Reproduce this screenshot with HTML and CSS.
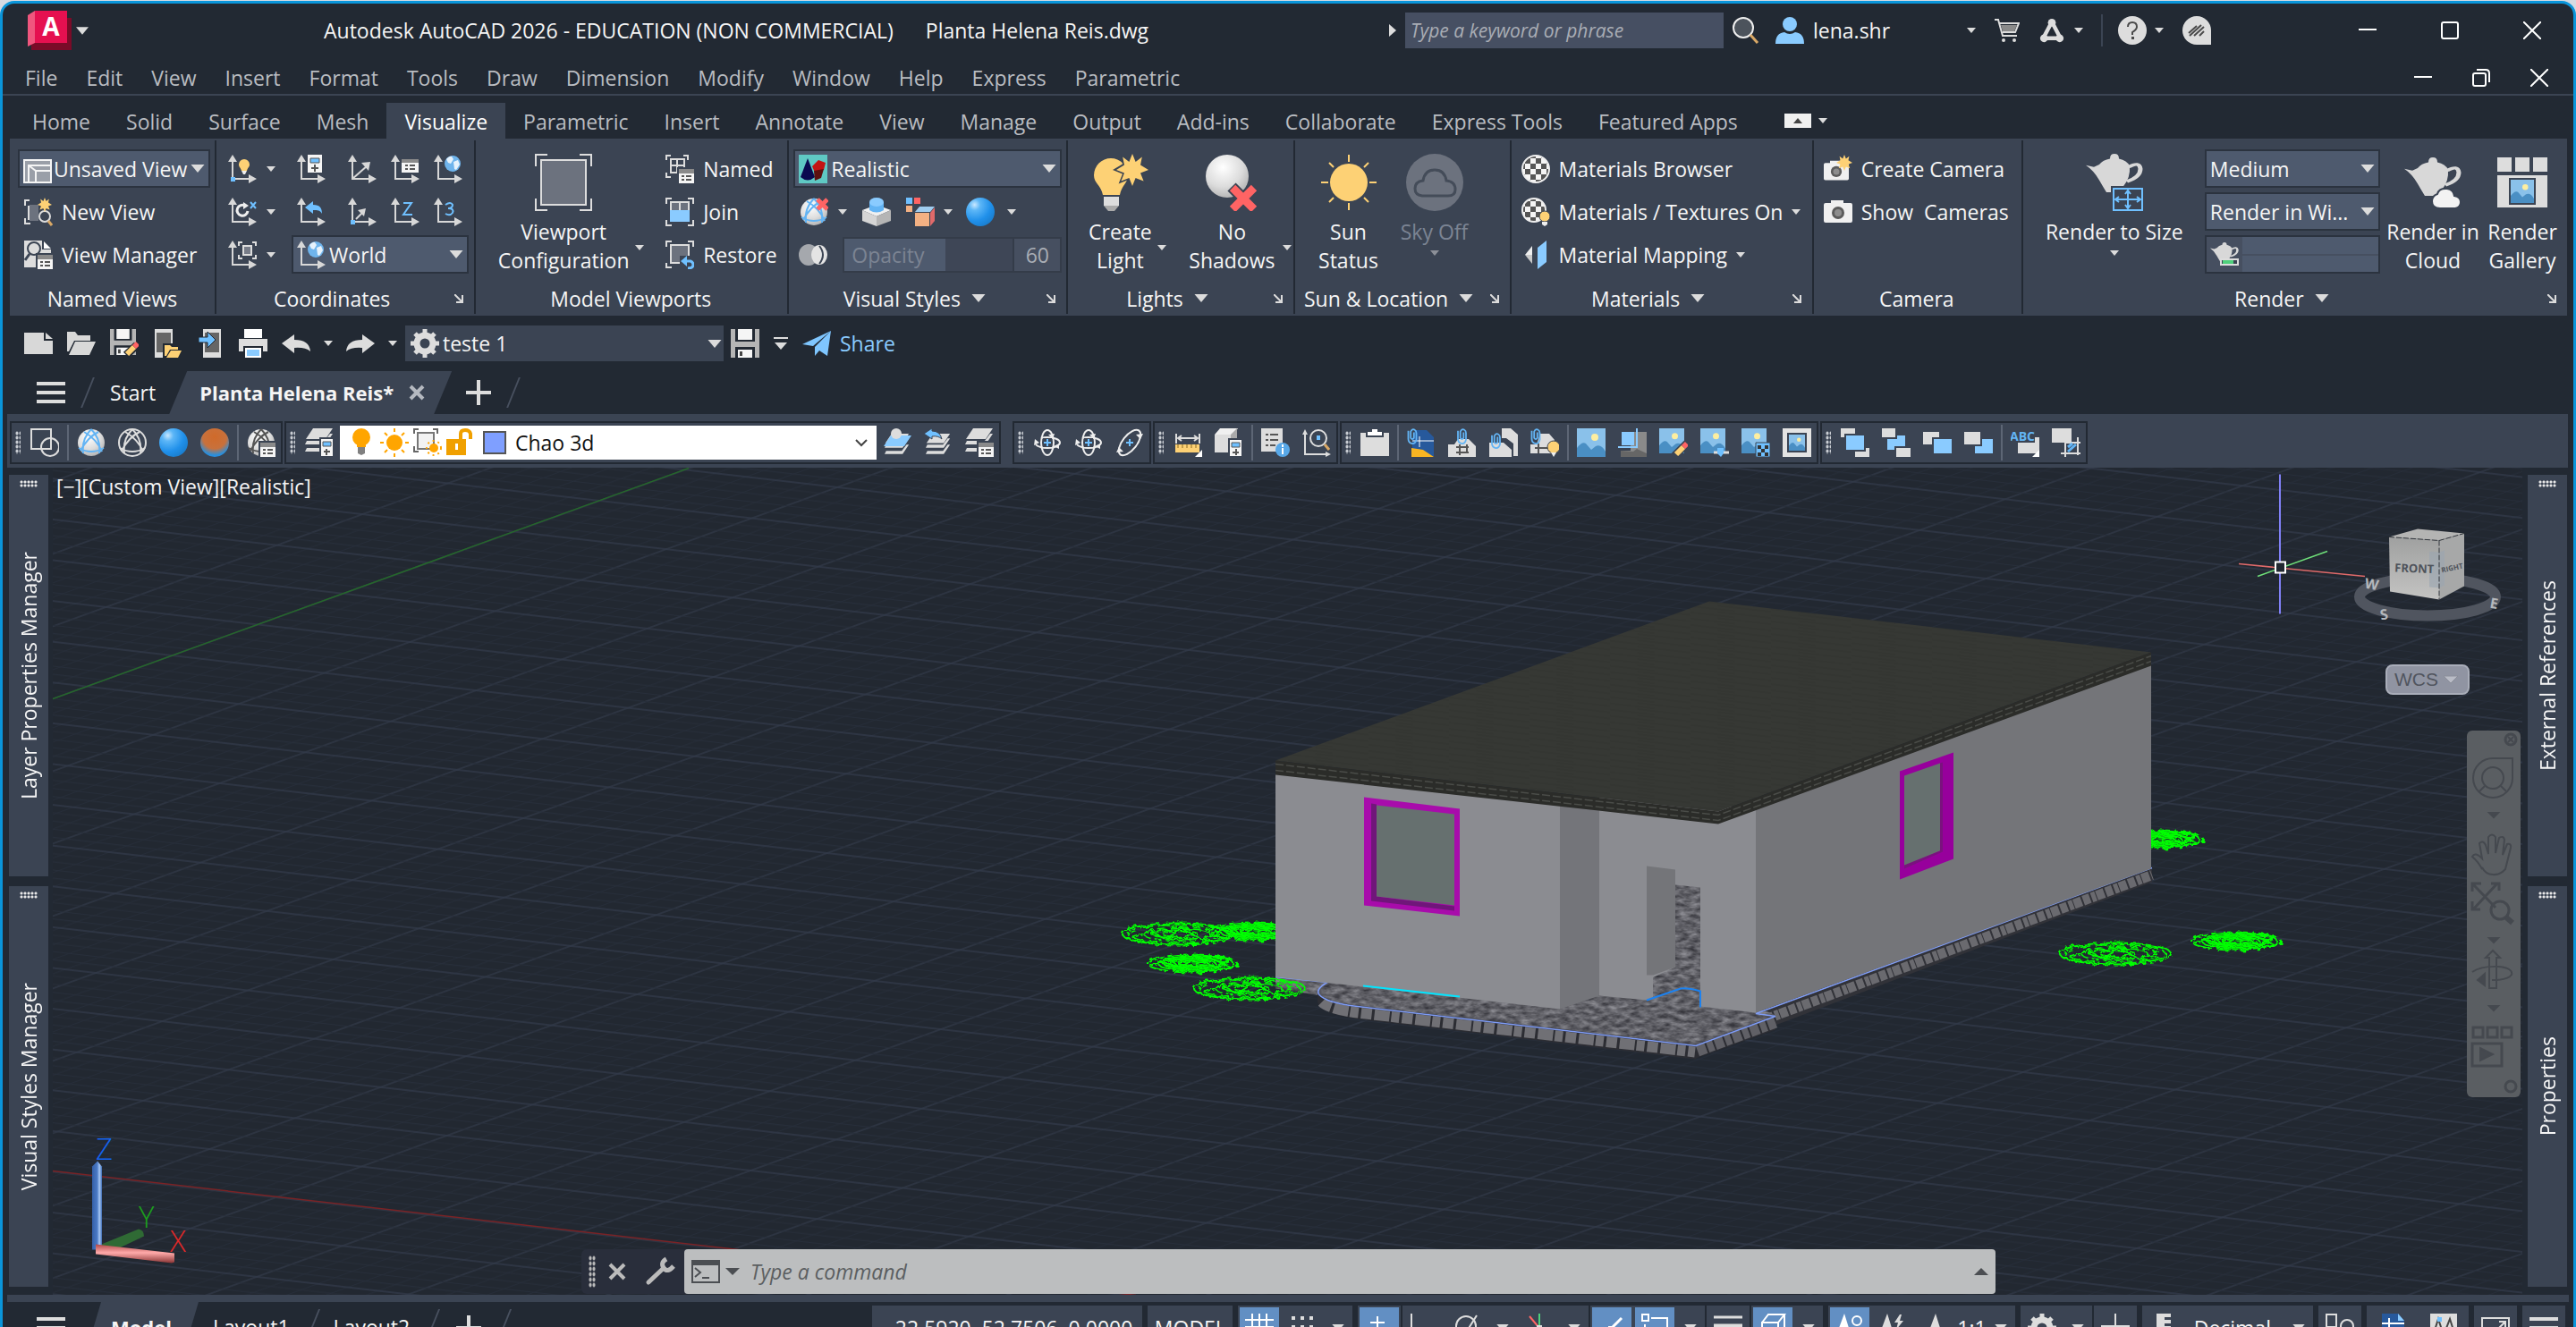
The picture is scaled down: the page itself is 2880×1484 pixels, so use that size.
FILE: index.html
```html
<!DOCTYPE html>
<html lang="en">
<head>
<meta charset="utf-8">
<title>Autodesk AutoCAD 2026 - Planta Helena Reis.dwg</title>
<link rel="stylesheet" href="styles.css">
</head>
<body>
<svg class="sprite" aria-hidden="true">
<defs>
<radialGradient id="gWhite" cx=".4" cy=".3" r=".75"><stop offset="0" stop-color="#fff"/><stop offset=".6" stop-color="#dcdcdc"/><stop offset="1" stop-color="#b0b0b0"/></radialGradient>
<radialGradient id="gBlue" cx=".3" cy=".25" r=".8"><stop offset="0" stop-color="#c9e8ff"/><stop offset=".25" stop-color="#5cb6f7"/><stop offset=".7" stop-color="#2090ea"/><stop offset="1" stop-color="#1a7fd0"/></radialGradient>
<radialGradient id="gOrange" cx=".5" cy=".3" r=".75"><stop offset="0" stop-color="#d06a2a"/><stop offset=".55" stop-color="#c8713c"/><stop offset=".85" stop-color="#2a8fdc"/><stop offset="1" stop-color="#2090ea"/></radialGradient>
<pattern id="check" width="12" height="12" patternUnits="userSpaceOnUse" x="4" y="4"><path fill="#f5f5f5" d="M0 0h12v12H0z"/><path fill="#555" d="M0 0h6v6H0zM6 6h6v6H6z"/></pattern>
</defs>
<symbol id="dn" viewBox="0 0 10 6"><path fill="#dcdcdc" d="M0 0h10L5 6z"/></symbol>
<symbol id="launch" viewBox="0 0 10 10"><path d="M0 0l8 8M9 1v8H2" fill="none" stroke="#dcdcdc" stroke-width="2"/></symbol>
<symbol id="badge" viewBox="0 0 32 32"><path fill="#22292f" stroke="#3b4453" stroke-width="2" d="M14 15h18v17H14z"/><path fill="#f5f5f5" d="M15 16h17v16H15z"/><path fill="#8a8a8a" d="M15 16h17v5H15z"/><path d="M18 24h3m2 0h6M18 28h3m2 0h6" stroke="#555" stroke-width="2"/></symbol>
<symbol id="axes" viewBox="0 0 32 32"><path fill="none" stroke="#d8d8d8" stroke-width="2" d="M5 6v21h20"/><path fill="#d8d8d8" d="M0 8l5-8 5 8zM23 22l9 5-9 5z"/></symbol>
<symbol id="globe" viewBox="0 0 20 20"><circle cx="10" cy="10" r="9" fill="#6fb4ec"/><path fill="#e6f2fc" d="M3 5q4-4 6-3l2 3-3 5-3-1zM11 8l5-2 2 5-4 6-2-1z"/></symbol>
<symbol id="ucs1" viewBox="0 0 32 32"><use href="#axes"/><path fill="#6fc0ff" d="M3 25h5v5H3z"/><path fill="#fdd175" d="M18 5a6 6 0 0 1 6 6c0 3-2 3-3 7h-6c-1-4-3-4-3-7a6 6 0 0 1 6-6z"/><path fill="#eee" d="M15 18h6l-2 4h-2z"/></symbol>
<symbol id="ucs2" viewBox="0 0 32 32"><use href="#axes"/><path fill="#f5f5f5" d="M12 0h16v20H12z"/><path fill="#6fc0ff" stroke="#555" d="M15 4h10v5H15z"/><path d="M20 11v8M16 15h8" stroke="#555" stroke-width="2"/></symbol>
<symbol id="ucs3" viewBox="0 0 32 32"><use href="#axes"/><path d="M5 27l17-15" stroke="#d8d8d8" stroke-width="2"/><path fill="#d8d8d8" d="M25 8l-2 10-8-9z"/></symbol>
<symbol id="ucs4" viewBox="0 0 32 32"><use href="#axes"/><path fill="#f5f5f5" d="M12 5h19v15H12z"/><path fill="#8a8a8a" d="M12 5h19v4H12z"/><path d="M16 12h3m2 0h6M16 16h3m2 0h6" stroke="#555" stroke-width="2"/></symbol>
<symbol id="ucs5" viewBox="0 0 32 32"><use href="#axes"/><use href="#globe" x="11" y="0" width="20" height="20"/></symbol>
<symbol id="ucs6" viewBox="0 0 32 32"><use href="#axes"/><path d="M19 9a6 6 0 1 0 3 6" fill="none" stroke="#eee" stroke-width="3"/><path fill="#eee" d="M17 5l6 4-6 4z"/><path d="M25 5l6 7m0-7l-6 7" stroke="#6fc0ff" stroke-width="2"/></symbol>
<symbol id="ucs7" viewBox="0 0 32 32"><use href="#axes"/><path fill="#6fc0ff" d="M9 11l9-7v4c8 0 10 4 10 10-2-4-5-4-10-4v4z"/></symbol>
<symbol id="ucs8" viewBox="0 0 32 32"><use href="#axes"/><path d="M9 24l8-8" stroke="#d8d8d8" stroke-width="2"/><path fill="#d8d8d8" d="M20 12l-2 9-7-7z"/><path fill="#6fc0ff" d="M3 25h5v5H3z"/></symbol>
<symbol id="ucs9" viewBox="0 0 32 32"><use href="#axes"/><path d="M14 6h9l-9 13h10" fill="none" stroke="#6fc0ff" stroke-width="2"/></symbol>
<symbol id="ucs10" viewBox="0 0 32 32"><use href="#axes"/><path d="M13 8q6-4 8 0 0 4-5 4 7 0 5 5-3 4-8 1" fill="none" stroke="#6fc0ff" stroke-width="2"/></symbol>
<symbol id="ucs11" viewBox="0 0 32 32"><use href="#axes"/><path fill="#777c88" stroke="#ddd" stroke-width="2" d="M17 6h9v10h-9z"/><path fill="none" stroke="#ddd" stroke-width="2" d="M12 6V2h4M27 2h4v4M12 16v4h4M27 20h4v-4"/></symbol>
<symbol id="frame" viewBox="0 0 32 32"><path fill="#9a9fa8" stroke="#f5f5f5" stroke-width="2" d="M1 6h30v25H1z"/><path fill="none" stroke="#f5f5f5" stroke-width="2" d="M6 31V12h25M6 12l8 6h17M14 18v13"/></symbol>
<symbol id="spark" viewBox="0 0 20 20"><path fill="#fdd175" d="M10 0l2 5 4-3-1 5 5 3-5 2 2 5-5-2-2 5-2-5-5 2 2-5-5-2 5-3-1-5 4 3z"/></symbol>
<symbol id="newview" viewBox="0 0 32 32"><path fill="#6c727e" d="M6 8h10v18H6z"/><path fill="none" stroke="#ddd" stroke-width="2" d="M6 3H1v6M1 23v6h6M5 9v16"/><circle cx="23" cy="21" r="6" fill="#3b4453" stroke="#ddd" stroke-width="2"/><path d="M27 26l4 5" stroke="#d9a866" stroke-width="3"/><use href="#spark" x="15" y="0" width="16" height="16"/></symbol>
<symbol id="viewmgr" viewBox="0 0 32 32"><path fill="#ddd" d="M0 0h20v10h10v20H0z"/><path fill="#fff" d="M22 1v8h8z"/><circle cx="11" cy="9" r="7" fill="#ddd" stroke="#3b4453" stroke-width="2"/><path d="M6 15l-5 7" stroke="#3b4453" stroke-width="3"/><use href="#badge"/></symbol>
<symbol id="vpbig" viewBox="0 0 64 64"><path fill="#6c727e" stroke="#ddd" stroke-width="2" d="M7 7h50v50H7z"/><path fill="none" stroke="#ddd" stroke-width="2" d="M1 14V1h13M50 1h13v13M1 50v13h13M50 63h13V50"/></symbol>
<symbol id="corners" viewBox="0 0 32 32"><path fill="none" stroke="#ddd" stroke-width="2" d="M1 7V1h6M25 1h6v6M1 25v6h6M25 31h6v-6"/></symbol>
<symbol id="named" viewBox="0 0 32 32"><path fill="none" stroke="#ddd" stroke-width="2" d="M1 6V1h5M20 1h5v5M1 20v5h5M6 5h15v15H6zM13 5v15M6 12h15"/><use href="#badge"/></symbol>
<symbol id="join" viewBox="0 0 32 32"><use href="#corners"/><path fill="#6c727e" stroke="#ddd" stroke-width="2" d="M6 5h20v12H6zM16 5v12"/><path fill="#8acbff" d="M5 14h22v13H5z"/></symbol>
<symbol id="restore" viewBox="0 0 32 32"><path fill="#6c727e" stroke="#ddd" stroke-width="2" d="M6 5h20v20H6z"/><path fill="none" stroke="#ddd" stroke-width="2" d="M1 7V1h6M25 1h6v6M1 25v5h6"/><path fill="#3b4453" d="M16 17h16v15H16z"/><path fill="none" stroke="#6fc0ff" stroke-width="3" d="M20 23h8q3 1 3 4 0 4-6 4"/><path fill="#6fc0ff" d="M17 23l7-6v12z"/></symbol>
<symbol id="real" viewBox="0 0 32 32"><path fill="#5fc9c4" d="M0 0h32v32H0z"/><path fill="#0a0a50" d="M10 4l8 21q-8 7-16 0z"/><path fill="#c31414" d="M15 13l7-7 8 3-2 8-10 3z"/><path fill="#5c1010" d="M17 18l11-2-3 10-7 3z"/></symbol>
<symbol id="ball" viewBox="0 0 32 32"><circle cx="16" cy="16" r="15" fill="url(#gWhite)"/></symbol>
<symbol id="wire" viewBox="0 0 32 32"><path fill="none" stroke="currentColor" stroke-width="2" d="M2 22q14 8 28 0M16 1Q5 12 7 28M16 1q11 11 9 27M8 4q14 8 20 22M24 4Q12 10 4 25"/></symbol>
<symbol id="ballx" viewBox="0 0 32 32"><use href="#ball"/><g color="#63b4f4"><use href="#wire"/></g><path d="M20 2l11 11M31 2L20 13" stroke="#ff6464" stroke-width="5"/></symbol>
<symbol id="ballblue" viewBox="0 0 32 32"><use href="#ball"/><g color="#63b4f4"><use href="#wire"/></g></symbol>
<symbol id="ballwire" viewBox="0 0 32 32"><circle cx="16" cy="16" r="15" fill="none" stroke="#ddd" stroke-width="2"/><g color="#ddd"><use href="#wire"/></g></symbol>
<symbol id="ballb" viewBox="0 0 32 32"><circle cx="16" cy="16" r="16" fill="url(#gBlue)"/></symbol>
<symbol id="ballo" viewBox="0 0 32 32"><circle cx="16" cy="16" r="16" fill="url(#gOrange)"/></symbol>
<symbol id="ballmgr" viewBox="0 0 32 32"><use href="#ball"/><g color="#555"><use href="#wire"/></g><use href="#badge"/></symbol>
<symbol id="box" viewBox="0 0 32 32"><path fill="#f0f0f0" d="M0 14l16-6 16 6-16 7z"/><path fill="#d5d5d5" d="M0 14l16 7v11L0 26z"/><path fill="#b5b5b5" d="M32 14l-16 7v11l16-6z"/><path fill="#63b4f4" d="M8 5v9q8 5 16 0V5z"/><ellipse cx="16" cy="5" rx="8" ry="5" fill="#8acbff"/></symbol>
<symbol id="cube" viewBox="0 0 32 32"><path fill="#6fc0ff" d="M0 0h7v7H0z"/><path fill="#ff6464" d="M9 0h7v7H9z"/><path fill="#f3b183" d="M0 9h7v7H0zM10 17h16v15H10z"/><path fill="#a0cdef" d="M10 16l5-6h17l-5 6z"/><path fill="#e06a6a" d="M27 17l5-6v15l-5 6z"/></symbol>
<symbol id="xray" viewBox="0 0 32 32"><ellipse cx="11" cy="16" rx="11" ry="12" fill="#a5a8ad"/><ellipse cx="23" cy="16" rx="9" ry="11" fill="#e4e4e4"/><path d="M23 6q8 10 0 20" stroke="#3b4453" stroke-width="2" fill="none"/></symbol>
<symbol id="light" viewBox="0 0 64 64"><path fill="#fdd175" d="M22 5a19 19 0 0 1 19 19c0 9-7 11-9 22H13C11 35 3 33 3 24A19 19 0 0 1 22 5z"/><path fill="#ddd" d="M14 48h17v10H14z"/><path fill="#aaa" d="M14 58h17l-5 6h-7z"/><path transform="translate(24 -4) scale(2.2)" fill="#3b4453" d="M10 0l2 5 4-3-1 5 5 3-5 2 2 5-5-2-2 5-2-5-5 2 2-5-5-2 5-3-1-5 4 3z"/><use href="#spark" x="28" y="0" width="36" height="36"/></symbol>
<symbol id="noshadow" viewBox="0 0 64 64"><circle cx="27" cy="25" r="24" fill="url(#gWhite)"/><path d="M32 37l26 26M58 37L32 63" stroke="#3b4453" stroke-width="13"/><path d="M33 38l24 24M57 38L33 62" stroke="#ff6464" stroke-width="9"/></symbol>
<symbol id="sun" viewBox="0 0 64 64"><circle cx="32" cy="32" r="21" fill="#fdd175"/><path stroke="#fdd175" stroke-width="2" d="M32 1v8M32 55v8M1 32h8M55 32h8M10 10l5 5M49 49l5 5M10 54l5-5M49 15l5-5"/></symbol>
<symbol id="sky" viewBox="0 0 64 64"><circle cx="32" cy="32" r="32" fill="#6c727e"/><path fill="#6c727e" stroke="#444c59" stroke-width="3" d="M18 47q-8-1-8-8 0-8 9-9 2-12 13-12t13 12q10 1 10 10 0 7-8 7z"/></symbol>
<symbol id="mat" viewBox="0 0 32 32"><circle cx="16" cy="16" r="15" fill="url(#check)" stroke="#eee" stroke-width="2"/></symbol>
<symbol id="mattex" viewBox="0 0 32 32"><circle cx="14" cy="14" r="13" fill="url(#check)" stroke="#eee" stroke-width="2"/><circle cx="26" cy="21" r="6" fill="#fdd175" stroke="#3b4453"/><path fill="#eee" d="M23 27h6v3l-3 2-3-2z"/></symbol>
<symbol id="matmap" viewBox="0 0 32 32"><path fill="#eee" d="M4 16l8-10v10z"/><path fill="#c9c9c9" d="M4 16h8v10z"/><path fill="#8acbff" d="M18 8l10-8v24l-10 8z"/></symbol>
<symbol id="cam" viewBox="0 0 32 32"><path fill="#f0f0f0" d="M8 6V3h14v3h8q2 0 2 2v18q0 2-2 2H2q-2 0-2-2V8q0-2 2-2z"/><circle cx="16" cy="17" r="7" fill="#5b5b5b"/><circle cx="16" cy="17" r="4" fill="#8d8d8d"/></symbol>
<symbol id="camnew" viewBox="0 0 32 32"><use href="#cam" y="4" width="28" height="28"/><use href="#spark" x="14" y="0" width="18" height="18"/></symbol>
<symbol id="teapot" viewBox="0 0 64 64" preserveAspectRatio="none"><path fill="#d8d8d8" d="M0 19l9 3 6-4q4-8 12-10 0-8 5-8t5 8q9 3 12 12 1 20-7 34l-1 10H23q-3-7-8-20Q9 28 0 19z"/><path fill="none" stroke="#d8d8d8" stroke-width="5" d="M48 22q12-10 13 3 0 14-15 21"/></symbol>
<symbol id="rsize" viewBox="0 0 64 64"><use href="#teapot" y="0" width="64" height="43"/><path fill="#3b4453" d="M28 36h36v28H28z"/><path fill="none" stroke="#6fc0ff" stroke-width="2" d="M31 39h32v24H31zM47 41v20M33 51h28M44 45l3-4 3 4M44 57l3 4 3-4M37 48l-4 3 4 3M57 48l4 3-4 3"/></symbol>
<symbol id="rcloud" viewBox="0 0 64 64"><use href="#teapot" x="0" y="4" width="64" height="43"/><path fill="#f3f3f3" stroke="#3b4453" stroke-width="2" d="M40 61q-9 0-9-8 0-6 6-8 2-7 11-6 7 1 8 8 7 1 7 7t-6 7z"/></symbol>
<symbol id="pic" viewBox="0 0 32 32"><path fill="#8ac1ea" d="M0 0h32v32H0z"/><circle cx="20" cy="10" r="4" fill="#fdeea0"/><path fill="#4a8fc4" d="M0 22q6-8 10-5l6 7 5-4q6-3 11 6v6H0z"/></symbol>
<symbol id="rgal" viewBox="0 0 64 64"><path fill="#ddd" d="M4 4h16v16H4zM24 4h16v16H24zM44 4h16v16H44zM4 24h56v36H4z"/><path fill="#3b4453" d="M17 27h30v30H17z"/><use href="#pic" x="19" y="29" width="26" height="26"/></symbol>
<symbol id="rprog" viewBox="0 0 32 32"><use href="#teapot" width="32" height="22" y="2"/><path fill="#3b4453" stroke="#ddd" stroke-width="2" d="M12 21h19v6H12z"/><path fill="#4fd17c" d="M14 22h12v4H14z"/></symbol>
<symbol id="new" viewBox="0 0 32 32"><path fill="#d8d8d8" d="M0 4h22v9h10v15H0z"/><path fill="#d8d8d8" d="M24 4v7h8z"/></symbol>
<symbol id="open" viewBox="0 0 32 32"><path fill="#d8d8d8" d="M0 3h9l3 4h14v6H8L2 25H0zM9 14h23l-7 15H2z"/></symbol>
<symbol id="save" viewBox="0 0 32 32"><path fill="#b5b5b5" d="M0 0h32v32H0z"/><path fill="#222933" d="M5 0h22v14H5zM5 20h22v12H5z"/><path fill="#f5f5f5" d="M8 0h16v12H8zM8 23h16v9H8z"/><path fill="#444" d="M10 25h3v5h-3z"/></symbol>
<symbol id="saveas" viewBox="0 0 32 32"><use href="#save" width="29" height="29"/><path stroke="#222933" stroke-width="9" d="M18 29l12-11"/><path stroke="#fdd175" stroke-width="6" d="M19 28l8-8"/><path stroke="#ff6464" stroke-width="6" d="M27 20l4-4"/></symbol>
<symbol id="mobopen" viewBox="0 0 32 32"><path fill="#ddd" d="M2 0h20v32H2z"/><path fill="#666" d="M4 4h16v22H4z"/><path fill="#222933" d="M11 16h21v16H11z"/><path fill="#fdd175" d="M13 18h6l2 2h7v3h-9l-4 7h-2zM20 24h12l-4 8H15z"/></symbol>
<symbol id="mobsave" viewBox="0 0 32 32"><path fill="#ddd" d="M8 0h20v32H8z"/><path fill="#666" d="M10 4h16v22H10z"/><path fill="#6fc0ff" stroke="#222933" d="M3 9h10V3l9 9-9 9v-6H3z"/></symbol>
<symbol id="print" viewBox="0 0 32 32"><path fill="#fff" d="M6 0h20v10H6z"/><path fill="#ddd" d="M0 11h32v14H0z"/><path fill="#222933" d="M5 19h22v13H5z"/><path fill="#8acbff" stroke="#fff" stroke-width="2" d="M8 22h16v9H8z"/></symbol>
<symbol id="undo" viewBox="0 0 32 32"><path fill="#ddd" d="M0 16L14 6v6q17 0 18 13-6-5-18-4v6z"/></symbol>
<symbol id="gear" viewBox="0 0 32 32"><circle cx="16" cy="16" r="9" fill="none" stroke="#ddd" stroke-width="7"/><path stroke="#ddd" stroke-width="5" d="M16 0v6M16 26v6M0 16h6M26 16h6M5 5l4 4M23 23l4 4M5 27l4-4M23 9l4-4"/></symbol>
<symbol id="share" viewBox="0 0 32 32"><path fill="#7fc6ff" d="M0 17L32 2 12 19zM14 20L32 2l-4 28-9-6-5 6z"/></symbol>
<symbol id="shapes" viewBox="0 0 32 32"><path fill="none" stroke="#ddd" stroke-width="2" d="M1 1h22v22H1z"/><circle cx="22" cy="21" r="10" fill="none" stroke="#ddd" stroke-width="2"/></symbol>
<symbol id="layers" viewBox="0 0 32 32"><path fill="#ddd" d="M9 0h22l-8 12H1z"/><path fill="#ddd" d="M2 14h20l6-8h3l-8 12H0zM2 22h20l6-8h3l-8 12H0z"/></symbol>
<symbol id="layprop" viewBox="0 0 32 32"><use href="#layers"/><path fill="#f5f5f5" stroke="#3b4453" stroke-width="2" d="M17 11h15v21H17z"/><path fill="#6fc0ff" stroke="#555" d="M20 15h9v5h-9z"/><path d="M24 23v7M21 26h7" stroke="#555" stroke-width="2"/></symbol>
<symbol id="laycur" viewBox="0 0 32 32"><use href="#layers" y="6" width="32" height="28"/><path fill="#8acbff" d="M9 8h23l-8 12H1z"/><circle cx="15" cy="6" r="6" fill="#ddd"/></symbol>
<symbol id="layprev" viewBox="0 0 32 32"><use href="#layers" y="6" width="32" height="28"/><path fill="#6fc0ff" stroke="#3b4453" d="M0 6l9-6v3q9 0 11 9-4-4-11-3v3z"/></symbol>
<symbol id="laystate" viewBox="0 0 32 32"><use href="#layers"/><use href="#badge"/></symbol>
<symbol id="bulb" viewBox="0 0 32 32"><circle cx="16" cy="10" r="10" fill="#ffa500"/><path fill="#ffa500" d="M11 15h10v6H11z"/><path fill="#808080" d="M12 21h8v7l-4 2-4-2z"/></symbol>
<symbol id="suno" viewBox="0 0 32 32"><circle cx="16" cy="16" r="9" fill="#ffa500"/><path stroke="#ffa500" stroke-width="2" d="M16 0v4M16 28v4M0 16h4M28 16h4M5 5l3 3M24 24l3 3M5 27l3-3M24 8l3-3"/></symbol>
<symbol id="vpfreeze" viewBox="0 0 32 32"><path fill="#f2f2f2" stroke="#777" stroke-width="2" d="M5 5h18v18H5z"/><path fill="none" stroke="#666" stroke-width="2" d="M1 6V1h5M22 1h5v5M1 20v6h5"/><circle cx="23" cy="22" r="5" fill="#ffa500"/><circle cx="23" cy="22" r="8" fill="none" stroke="#ffa500" stroke-width="2" stroke-dasharray="2 4"/></symbol>
<symbol id="lock" viewBox="0 0 32 32"><path fill="none" stroke="#f0a000" stroke-width="4" d="M16 14V6q0-4 5-4t6 4v6"/><path fill="#f0a000" d="M0 12h22v18H0z"/><path fill="#fff" d="M10 17h3v7h-3z"/></symbol>
<symbol id="orbit" viewBox="0 0 32 32"><ellipse cx="16" cy="16" rx="7" ry="14" fill="none" stroke="#eee" stroke-width="2"/><ellipse cx="16" cy="16" rx="14" ry="6" fill="none" stroke="#eee" stroke-width="2" stroke-dasharray="30 12"/><path fill="#eee" d="M2 12l-1 7 6-3zM24 6l-7 1 5 5zM29 17l-6 3 6 3z"/><path fill="#3b4453" d="M11 11h10v10H11z"/><path d="M16 12v8M12 16h8" stroke="#6fc0ff" stroke-width="2"/></symbol>
<symbol id="orbit3" viewBox="0 0 32 32"><ellipse cx="16" cy="16" rx="8" ry="17" transform="rotate(38 16 16)" fill="none" stroke="#eee" stroke-width="2"/><path fill="#eee" d="M31 6l-8 1 5 5zM1 27l8-1-5-5z"/><path d="M16 12v8M12 16h8" stroke="#6fc0ff" stroke-width="2"/></symbol>
<symbol id="dist" viewBox="0 0 32 32"><path d="M3 6v11M29 6v11M5 11h22M9 8l-4 3 4 3M23 8l4 3-4 3" fill="none" stroke="#ddd" stroke-width="2"/><path fill="#fdd175" d="M2 18h27v9H2z"/><path d="M5 18v4m5-4v4m5-4v4m5-4v4m5-4v4" stroke="#8a6a20"/><path fill="#fff" d="M32 24v8h-8z"/></symbol>
<symbol id="region" viewBox="0 0 32 32"><path fill="#f0f0f0" d="M0 7l6-7h20l-5 7z"/><path fill="#ddd" d="M0 7h18v20H0z"/><path fill="#aaa" d="M18 7l7-7v12l-7 4z"/><path fill="#f5f5f5" stroke="#3b4453" stroke-width="2" d="M16 12h15v20H16z"/><path fill="#6fc0ff" stroke="#555" d="M19 16h9v5h-9z"/><path d="M24 23v7M20 27h7" stroke="#555" stroke-width="2"/></symbol>
<symbol id="list" viewBox="0 0 32 32"><path fill="#ddd" d="M0 0h24v26H0z"/><path d="M5 7h3m2 0h9M5 13h3m2 0h9M5 19h3m2 0h6" stroke="#555" stroke-width="2"/><circle cx="24" cy="24" r="8" fill="#58a8e8"/><path d="M24 22v7M24 18v3" stroke="#fff" stroke-width="2"/></symbol>
<symbol id="idpt" viewBox="0 0 32 32"><path fill="none" stroke="#ddd" stroke-width="2" d="M3 6v23h24"/><path fill="#ddd" d="M0 7l3-6 3 6zM26 26l6 3-6 3z"/><circle cx="18" cy="11" r="9" fill="none" stroke="#ddd" stroke-width="2"/><path fill="#6fc0ff" d="M16 8h4v5h-4z"/><path stroke="#d9a866" stroke-width="3" d="M25 18l5 6"/></symbol>
<symbol id="paste" viewBox="0 0 32 32"><path fill="#ddd" d="M0 5h32v26H0z"/><path fill="#fff" stroke="#3b4453" stroke-width="2" d="M7 3h5V0h8v3h5v6H7z"/></symbol>
<symbol id="clip" viewBox="0 0 12 20"><path fill="none" stroke="#63b4f4" stroke-width="2" d="M8 5v7q-2 3-4 0V4q2-4 5-2 2 1 2 4v8q-1 5-5 5-5-1-5-6V3"/></symbol>
<symbol id="att1" viewBox="0 0 32 32"><path fill="#27599c" d="M9 2h13l8 8v21H6V12z"/><path fill="#f9b522" d="M5 22l13 2 12 8H5z"/><path d="M6 14h24M14 9v12" stroke="#fff"/><use href="#clip" x="0" y="0" width="12" height="18"/></symbol>
<symbol id="att2" viewBox="0 0 32 32"><path fill="#ddd" d="M0 18h7l4-6h12l8 8v12H0z"/><path d="M13 18v12M21 18v10M9 21h14M9 27h14" stroke="#555" stroke-width="2"/><use href="#clip" x="9" y="0" width="13" height="18"/></symbol>
<symbol id="att3" viewBox="0 0 32 32"><path fill="#ddd" d="M14 0h10l8 7v24h-5V17l-8-6h-5zM0 16h16l9 8v8H0z"/><use href="#clip" x="1" y="5" width="13" height="18"/></symbol>
<symbol id="att4" viewBox="0 0 32 32"><path fill="#ddd" d="M0 18h7l4-12h10l6 7v15H0z"/><path d="M9 17v11M5 22h18" stroke="#555" stroke-width="2"/><circle cx="26" cy="21" r="7" fill="#fdd175" stroke="#3b4453"/><path fill="#eee" d="M23 27h6l-3 5z"/><use href="#clip" x="0" y="0" width="12" height="18"/></symbol>
<symbol id="picclip" viewBox="0 0 32 32"><path fill="#8a8a8a" d="M14 4h18v28H3v-7h11z"/><path fill="#666" d="M3 32v-7l14 1 4-3 11 5v4z"/><path fill="#8acbff" d="M4 4h14v15H4z"/><path d="M21 0v21H0" stroke="#8acbff" stroke-width="2" fill="none"/></symbol>
<symbol id="picedit" viewBox="0 0 32 32"><use href="#pic" width="28" height="28"/><path stroke="#3b4453" stroke-width="9" d="M17 31l14-14"/><path stroke="#fdd175" stroke-width="6" d="M19 29l8-8"/><path stroke="#ff6464" stroke-width="6" d="M27 21l4-4"/></symbol>
<symbol id="picq" viewBox="0 0 32 32"><use href="#pic" width="28" height="28"/><path stroke="#ddd" stroke-width="3" d="M15 27h17"/><path fill="#6fc0ff" d="M19 22h7v6l-3 4-4-4z"/></symbol>
<symbol id="pictr" viewBox="0 0 32 32"><use href="#pic" width="28" height="28"/><path fill="#6fc0ff" stroke="#3b4453" d="M16 16h16v16H16z"/><path fill="#333" d="M18 19h4v4h-4zM26 19h4v4h-4zM22 23h4v4h-4zM18 27h4v4h-4zM26 27h4v4h-4z"/></symbol>
<symbol id="picfr" viewBox="0 0 32 32"><path fill="#e3e3e3" d="M0 0h32v32H0z"/><path fill="#3b4453" d="M5 5h22v22H5z"/><use href="#pic" x="7" y="7" width="18" height="18"/></symbol>
<symbol id="ord1" viewBox="0 0 32 32"><path fill="#ddd" d="M0 0h16v10H0zM16 22h16v10H16z"/><path fill="#8acbff" stroke="#3b4453" stroke-width="2" d="M5 7h22v18H5z"/></symbol>
<symbol id="ord2" viewBox="0 0 32 32"><path fill="#8acbff" d="M6 8h20v16H6z"/><path fill="#ddd" stroke="#3b4453" stroke-width="2" d="M-1-1h17v12H-1zM15 21h18v12H15z"/></symbol>
<symbol id="ord3" viewBox="0 0 32 32"><path fill="#ddd" d="M0 4h18v14H0z"/><path fill="#8acbff" stroke="#3b4453" stroke-width="2" d="M11 11h22v18H11z"/></symbol>
<symbol id="ord4" viewBox="0 0 32 32"><path fill="#8acbff" d="M12 12h20v16H12z"/><path fill="#ddd" stroke="#3b4453" stroke-width="2" d="M-1 3h20v16H-1z"/></symbol>
<symbol id="abc" viewBox="0 0 32 32"><path fill="#ddd" d="M8 10h24v18H8z"/><path fill="#3b4453" d="M0 0h27v16H0z"/><path fill="#fff" d="M32 24v8h-8z"/><text x="-1" y="14" font-size="14" font-weight="700" fill="#63b4f4" font-family="Open Sans">ABC</text></symbol>
<symbol id="hatchb" viewBox="0 0 32 32"><path fill="#ddd" d="M0 0h22v16H0z"/><path d="M15 13v19M29 10v20M10 28h22M15 16h17" stroke="#ddd" stroke-width="2"/><path stroke="#63b4f4" stroke-width="3" d="M18 26l9-8M18 21l5-4"/></symbol>
<symbol id="burger" viewBox="0 0 32 32"><path fill="#ddd" d="M0 4h32v4H0zM0 14h32v4H0zM0 24h32v4H0z"/></symbol>
<symbol id="plus" viewBox="0 0 28 28"><path fill="#ddd" d="M12 0h4v12h12v4H16v12h-4V16H0v-4h12z"/></symbol>
<symbol id="search" viewBox="0 0 32 32"><circle cx="13" cy="13" r="11" fill="#4c535c" stroke="#eee" stroke-width="2"/><path stroke="#d9a866" stroke-width="3" d="M21 21l8 9"/></symbol>
<symbol id="user" viewBox="0 0 32 32"><circle cx="16" cy="9" r="8" fill="#8acbff"/><path fill="#8acbff" d="M0 31q0-12 10-13 6 4 12 0 10 1 10 13z"/></symbol>
<symbol id="cart" viewBox="0 0 28 28"><path fill="none" stroke="#ddd" stroke-width="2" d="M0 2h4l5 18h16M5 6h22l-4 10H9"/><path fill="#8a8a8a" d="M7 8h18l-3 7H9z"/><circle cx="10" cy="25" r="2" fill="#ddd"/><circle cx="22" cy="25" r="2" fill="#ddd"/></symbol>
<symbol id="alogo" viewBox="0 0 32 32"><path fill="none" stroke="#ddd" stroke-width="5" stroke-linejoin="round" d="M16 5L5 26h22z"/><circle cx="16" cy="6" r="5" fill="#ddd"/><circle cx="6" cy="26" r="5" fill="#ddd"/><circle cx="26" cy="26" r="5" fill="#ddd"/></symbol>
<symbol id="help" viewBox="0 0 32 32"><circle cx="16" cy="16" r="16" fill="#ddd"/><path d="M11 12q0-5 5-5t5 5q0 3-5 6v3" fill="none" stroke="#4a4a4a" stroke-width="2"/><path fill="#4a4a4a" d="M15 23h3v3h-3z"/></symbol>
<symbol id="assist" viewBox="0 0 32 32"><path fill="#ddd" d="M16 0a16 16 0 0 1 16 16v16H16a16 16 0 0 1 0-32z"/><path stroke="#4a4a4a" stroke-width="2" d="M7 19l9-8M8 22l13-12M13 22l11-10M19 22l5-5"/></symbol>
<symbol id="min" viewBox="0 0 20 20"><path stroke="#fff" stroke-width="2" d="M0 9h20"/></symbol>
<symbol id="max" viewBox="0 0 20 20"><rect x="1" y="1" width="18" height="18" rx="2" fill="none" stroke="#fff" stroke-width="2"/></symbol>
<symbol id="rest" viewBox="0 0 20 20"><rect x="1" y="5" width="14" height="14" rx="2" fill="none" stroke="#fff" stroke-width="2"/><path d="M5 1h10q4 0 4 4v10" fill="none" stroke="#fff" stroke-width="2"/></symbol>
<symbol id="close" viewBox="0 0 20 20"><path stroke="#fff" stroke-width="2" d="M0 0l20 20M20 0L0 20"/></symbol>
<symbol id="sgrid" viewBox="0 0 32 32"><path stroke="#fff" stroke-width="2" d="M8 0v32M16 0v32M24 0v32M0 7h32M0 15h32M0 23h32"/></symbol>
<symbol id="sdots" viewBox="0 0 32 32"><path stroke="#ddd" stroke-width="4" stroke-dasharray="4 6" d="M4 5h26M4 15h26M4 25h26"/></symbol>
<symbol id="sinfer" viewBox="0 0 32 32"><path stroke="#fff" stroke-width="2" d="M14 3v16M6 10h16"/></symbol>
<symbol id="sortho" viewBox="0 0 32 32"><path stroke="#ddd" stroke-width="2" fill="none" d="M2 0v28h28"/></symbol>
<symbol id="spolar" viewBox="0 0 32 32"><circle cx="15" cy="14" r="11" fill="none" stroke="#ddd" stroke-width="2"/><path d="M12 26L27 2" stroke="#ddd" stroke-width="2"/></symbol>
<symbol id="siso" viewBox="0 0 32 32"><path stroke="#ff6464" stroke-width="2" d="M6 3l10 12"/><path stroke="#4fd17c" stroke-width="2" d="M17 0v15"/><path fill="#ddd" d="M14 13h6v8h-6z"/></symbol>
<symbol id="strack" viewBox="0 0 32 32"><path stroke="#fff" stroke-width="3" d="M4 28L27 5"/><path fill="#fff" d="M12 14h7v7h-7z"/></symbol>
<symbol id="ssnap" viewBox="0 0 32 32"><path fill="none" stroke="#fff" stroke-width="2" d="M2 1h7v7H2zM12 5h18v20M5 12v16"/></symbol>
<symbol id="slw" viewBox="0 0 32 32"><path stroke="#ddd" d="M0 4h32" stroke-width="3"/><path stroke="#ddd" d="M0 14h32" stroke-width="5"/><path stroke="#ddd" d="M0 25h32" stroke-width="7"/></symbol>
<symbol id="sbox" viewBox="0 0 32 32"><path fill="none" stroke="#fff" stroke-width="2" d="M4 10h18v18H4zM4 10l7-9h18l-7 9M29 1v18l-7 9"/></symbol>
<symbol id="sann" viewBox="0 0 32 32"><path fill="#fff" d="M10 0l5 16v14H4V16z"/><circle cx="24" cy="8" r="5" fill="none" stroke="#fff" stroke-width="2"/></symbol>
<symbol id="sann2" viewBox="0 0 32 32"><path fill="#ddd" d="M10 0l5 16v14H4V16zM24 1l-6 9h4l-2 8 8-10h-4l2-7z"/></symbol>
<symbol id="sann3" viewBox="0 0 32 32"><path fill="#ddd" d="M16 0l5 16v14H10V16z"/></symbol>
<symbol id="sadd" viewBox="0 0 32 32"><path stroke="#ddd" stroke-width="2" d="M16 0v32M0 14h32"/></symbol>
<symbol id="sruler" viewBox="0 0 32 32"><path fill="#ddd" d="M8 0h16v4h-7v3h7v4h-7v3h7v18H8z"/></symbol>
<symbol id="sqp" viewBox="0 0 32 32"><path fill="none" stroke="#ddd" stroke-width="2" d="M1 1h11v14H1z"/><circle cx="24" cy="14" r="7" fill="none" stroke="#ddd" stroke-width="2"/></symbol>
<symbol id="sdwg" viewBox="0 0 32 32"><path fill="#27599c" d="M4 0h18l7 8v24H4z"/><path fill="#8acbff" d="M22 0v8h7z"/><path d="M4 11h25M12 5v14" stroke="#fff" stroke-width="2"/></symbol>
<symbol id="sgfx" viewBox="0 0 32 32"><path fill="#ddd" d="M1 0h30v32H1z"/><path fill="none" stroke="#444" stroke-width="2" d="M3 28L10 6l6 18 7-18 7 22"/><path fill="#6fc0ff" d="M9 4h5v5H9z"/></symbol>
<symbol id="sclean" viewBox="0 0 32 32"><path fill="none" stroke="#ddd" stroke-width="2" d="M1 5h30v26H1zM18 18l9-9M20 9h7v7"/></symbol>
</svg>

<div class="app">
<header class="titlebar">
  <button class="logo" aria-label="Application menu"><svg viewBox="0 0 49 44"><path fill="#7a0b28" d="M4 8h45v36H4z"/><path fill="#f0567e" d="M0 5l8-5v36l-8 4z"/><path fill="#e51050" d="M8 0h36v36H8z"/><text x="26" y="28" text-anchor="middle" font-size="28" font-weight="700" fill="#fff" font-family="Open Sans">A</text></svg></button>
  <svg class="caret big"><use href="#dn"/></svg>
  <div class="title"><span>Autodesk AutoCAD 2026 - EDUCATION (NON COMMERCIAL)</span><span>Planta Helena Reis.dwg</span></div>
  <svg class="play" viewBox="0 0 8 14"><path fill="#ddd" d="M0 0l8 7-8 7z"/></svg>
  <input class="search" type="text" placeholder="Type a keyword or phrase" aria-label="Type a keyword or phrase">
  <button class="tb" aria-label="Search"><svg class="i32"><use href="#search"/></svg></button>
  <button class="tb account"><svg class="i32"><use href="#user"/></svg><span>lena.shr</span><svg class="caret"><use href="#dn"/></svg></button>
  <button class="tb" aria-label="Store"><svg class="i28"><use href="#cart"/></svg></button>
  <button class="tb" aria-label="Autodesk apps"><svg class="i28"><use href="#alogo"/></svg></button>
  <svg class="caret"><use href="#dn"/></svg>
  <i class="vline"></i>
  <button class="tb" aria-label="Help"><svg class="i32"><use href="#help"/></svg></button>
  <svg class="caret"><use href="#dn"/></svg>
  <button class="tb assist" aria-label="Assistant"><svg class="i32"><use href="#assist"/></svg></button>
  <div class="winctl">
    <button aria-label="Minimize"><svg class="i20"><use href="#min"/></svg></button><button aria-label="Maximize"><svg class="i20"><use href="#max"/></svg></button><button aria-label="Close"><svg class="i20"><use href="#close"/></svg></button>
  </div>
</header>

<nav class="menubar">
  <a href="#">File</a><a href="#">Edit</a><a href="#">View</a><a href="#">Insert</a><a href="#">Format</a><a href="#">Tools</a><a href="#">Draw</a><a href="#">Dimension</a><a href="#">Modify</a><a href="#">Window</a><a href="#">Help</a><a href="#">Express</a><a href="#">Parametric</a>
  <div class="docctl"><button aria-label="Minimize drawing"><svg class="i20"><use href="#min"/></svg></button><button aria-label="Restore drawing"><svg class="i20"><use href="#rest"/></svg></button><button aria-label="Close drawing"><svg class="i20"><use href="#close"/></svg></button></div>
</nav>

<nav class="rtabs">
  <a href="#">Home</a><a href="#">Solid</a><a href="#">Surface</a><a href="#">Mesh</a><a href="#" class="on">Visualize</a><a href="#">Parametric</a><a href="#">Insert</a><a href="#">Annotate</a><a href="#">View</a><a href="#">Manage</a><a href="#">Output</a><a href="#">Add-ins</a><a href="#">Collaborate</a><a href="#">Express Tools</a><a href="#">Featured Apps</a>
  <button class="rmin" aria-label="Minimize ribbon"><svg viewBox="0 0 30 16"><path fill="#f0f0f0" d="M0 0h30v16H0z"/><path fill="#444" d="M10 11h10l-5-6z"/></svg></button>
  <svg class="caret"><use href="#dn"/></svg>
</nav>

<section class="ribbon">
  <div class="panel">
    <div class="body rows p1">
      <label class="combo"><svg class="i32"><use href="#frame"/></svg><select aria-label="Saved view"><option>Unsaved View</option></select><svg class="caret big"><use href="#dn"/></svg></label>
      <button class="rb"><svg class="i32"><use href="#newview"/></svg>New View</button>
      <button class="rb"><svg class="i32"><use href="#viewmgr"/></svg>View Manager</button>
    </div>
    <div class="ptitle"><span>Named Views</span></div>
  </div>
  <div class="panel">
    <div class="body ucs">
      <button aria-label="UCS"><svg class="i32"><use href="#ucs1"/></svg></button><svg class="caret"><use href="#dn"/></svg><button aria-label="UCS settings"><svg class="i32"><use href="#ucs2"/></svg></button><button aria-label="UCS origin"><svg class="i32"><use href="#ucs3"/></svg></button><button aria-label="Named UCS"><svg class="i32"><use href="#ucs4"/></svg></button><button aria-label="World UCS"><svg class="i32"><use href="#ucs5"/></svg></button>
      <button aria-label="Rotate X"><svg class="i32"><use href="#ucs6"/></svg></button><svg class="caret"><use href="#dn"/></svg><button aria-label="Previous UCS"><svg class="i32"><use href="#ucs7"/></svg></button><button aria-label="Origin"><svg class="i32"><use href="#ucs8"/></svg></button><button aria-label="Z axis vector"><svg class="i32"><use href="#ucs9"/></svg></button><button aria-label="3 point"><svg class="i32"><use href="#ucs10"/></svg></button>
      <button aria-label="View UCS"><svg class="i32"><use href="#ucs11"/></svg></button><svg class="caret"><use href="#dn"/></svg>
      <label class="combo"><svg class="i32"><use href="#ucs5"/></svg><select aria-label="UCS name"><option>World</option></select><svg class="caret big"><use href="#dn"/></svg></label>
    </div>
    <div class="ptitle"><span>Coordinates</span><svg class="launch"><use href="#launch"/></svg></div>
  </div>
  <div class="panel">
    <div class="body cols p3">
      <button class="lb"><svg class="i64"><use href="#vpbig"/></svg><span>Viewport<br>Configuration</span></button><svg class="caret side"><use href="#dn"/></svg>
      <div class="rows"><button class="rb"><svg class="i32"><use href="#named"/></svg>Named</button><button class="rb"><svg class="i32"><use href="#join"/></svg>Join</button><button class="rb"><svg class="i32"><use href="#restore"/></svg>Restore</button></div>
    </div>
    <div class="ptitle"><span>Model Viewports</span></div>
  </div>
  <div class="panel">
    <div class="body rows p4">
      <label class="combo"><svg class="i32"><use href="#real"/></svg><select aria-label="Visual style"><option>Realistic</option></select><svg class="caret big"><use href="#dn"/></svg></label>
      <div class="vs"><button aria-label="Facet edges"><svg class="i32"><use href="#ballx"/></svg></button><svg class="caret"><use href="#dn"/></svg><button aria-label="Isolines"><svg class="i32"><use href="#box"/></svg></button><button aria-label="Face colours"><svg class="i32"><use href="#cube"/></svg></button><svg class="caret"><use href="#dn"/></svg><button aria-label="Shading"><svg class="i32"><use href="#ballb"/></svg></button><svg class="caret"><use href="#dn"/></svg></div>
      <div class="opac"><svg class="i32"><use href="#xray"/></svg><div class="slider"><input id="op" type="range" value="60" aria-label="Opacity"><label for="op">Opacity</label></div><input class="opnum" type="text" value="60" aria-label="Opacity value"></div>
    </div>
    <div class="ptitle"><span>Visual Styles<svg class="caret big"><use href="#dn"/></svg></span><svg class="launch"><use href="#launch"/></svg></div>
  </div>
  <div class="panel">
    <div class="body cols p5">
      <button class="lb"><svg class="i64"><use href="#light"/></svg><span>Create<br>Light</span></button><svg class="caret side"><use href="#dn"/></svg>
      <button class="lb"><svg class="i64"><use href="#noshadow"/></svg><span>No<br>Shadows</span></button><svg class="caret side"><use href="#dn"/></svg>
    </div>
    <div class="ptitle"><span>Lights<svg class="caret big"><use href="#dn"/></svg></span><svg class="launch"><use href="#launch"/></svg></div>
  </div>
  <div class="panel">
    <div class="body cols p6">
      <button class="lb"><svg class="i64"><use href="#sun"/></svg><span>Sun<br>Status</span></button>
      <button class="lb off" disabled><svg class="i64"><use href="#sky"/></svg><span>Sky Off</span><svg class="caret"><use href="#dn"/></svg></button>
    </div>
    <div class="ptitle"><span>Sun &amp; Location<svg class="caret big"><use href="#dn"/></svg></span><svg class="launch"><use href="#launch"/></svg></div>
  </div>
  <div class="panel">
    <div class="body rows p7">
      <button class="rb"><svg class="i32"><use href="#mat"/></svg>Materials Browser</button>
      <button class="rb"><svg class="i32"><use href="#mattex"/></svg>Materials / Textures On<svg class="caret"><use href="#dn"/></svg></button>
      <button class="rb"><svg class="i32"><use href="#matmap"/></svg>Material Mapping<svg class="caret"><use href="#dn"/></svg></button>
    </div>
    <div class="ptitle"><span>Materials<svg class="caret big"><use href="#dn"/></svg></span><svg class="launch"><use href="#launch"/></svg></div>
  </div>
  <div class="panel">
    <div class="body rows p7">
      <button class="rb"><svg class="i32"><use href="#camnew"/></svg>Create Camera</button>
      <button class="rb pre"><svg class="i32"><use href="#cam"/></svg>Show  Cameras</button>
    </div>
    <div class="ptitle"><span>Camera</span></div>
  </div>
  <div class="panel">
    <div class="body cols p9">
      <button class="lb"><svg class="i64"><use href="#rsize"/></svg><span>Render to Size</span><svg class="caret"><use href="#dn"/></svg></button>
      <div class="rows">
        <label class="combo"><select aria-label="Render preset"><option>Medium</option></select><svg class="caret big"><use href="#dn"/></svg></label>
        <label class="combo"><select aria-label="Render target"><option>Render in Wi...</option></select><svg class="caret big"><use href="#dn"/></svg></label>
        <div class="combo prog"><svg class="i32"><use href="#rprog"/></svg><div><i></i><i></i></div></div>
      </div>
      <button class="lb"><svg class="i64"><use href="#rcloud"/></svg><span>Render in<br>Cloud</span></button>
      <button class="lb"><svg class="i64"><use href="#rgal"/></svg><span>Render<br>Gallery</span></button>
    </div>
    <div class="ptitle"><span>Render<svg class="caret big"><use href="#dn"/></svg></span><svg class="launch"><use href="#launch"/></svg></div>
  </div>
</section>

<div class="qat">
  <button aria-label="New"><svg class="i32"><use href="#new"/></svg></button><button aria-label="Open"><svg class="i32"><use href="#open"/></svg></button><button aria-label="Save as"><svg class="i32"><use href="#saveas"/></svg></button><button aria-label="Open from mobile"><svg class="i32"><use href="#mobopen"/></svg></button><button aria-label="Save to mobile"><svg class="i32"><use href="#mobsave"/></svg></button><button aria-label="Plot"><svg class="i32"><use href="#print"/></svg></button><button aria-label="Undo"><svg class="i32"><use href="#undo"/></svg></button><svg class="caret"><use href="#dn"/></svg><button class="redo" aria-label="Redo"><svg class="i32"><use href="#undo"/></svg></button><svg class="caret"><use href="#dn"/></svg>
  <label class="ws"><svg class="i32"><use href="#gear"/></svg><select aria-label="Workspace"><option>teste 1</option></select><svg class="caret big"><use href="#dn"/></svg></label>
  <button aria-label="Save workspace"><svg class="i32"><use href="#save"/></svg></button>
  <button class="more" aria-label="Customize"><svg viewBox="0 0 16 14"><path fill="#ddd" d="M0 0h16v2H0zM1 6h14l-7 8z"/></svg></button>
  <a class="share" href="#"><svg class="i32"><use href="#share"/></svg>Share</a>
</div>

<nav class="ftabs">
  <button class="burger" aria-label="Drawing list"><svg class="i32"><use href="#burger"/></svg></button>
  <i class="slash"></i><a href="#" class="start">Start</a>
  <div class="ftab"><a href="#">Planta Helena Reis*</a><button aria-label="Close tab"><svg viewBox="0 0 16 16"><path stroke="#b5b9c0" stroke-width="4" d="M1 1l14 14M15 1L1 15"/></svg></button></div>
  <button class="add" aria-label="New drawing"><svg class="i28"><use href="#plus"/></svg></button><i class="slash"></i>
</nav>

<div class="bars">
  <div class="bar"><i class="grip"></i><button aria-label="2D wireframe"><svg class="i32"><use href="#shapes"/></svg></button><i class="sep"></i><button aria-label="Hidden"><svg class="i32"><use href="#ballblue"/></svg></button><button aria-label="Wireframe"><svg class="i32"><use href="#ballwire"/></svg></button><button aria-label="Conceptual"><svg class="i32"><use href="#ballb"/></svg></button><button aria-label="Realistic"><svg class="i32"><use href="#ballo"/></svg></button><i class="sep"></i><button aria-label="Manage visual styles"><svg class="i32"><use href="#ballmgr"/></svg></button></div>
  <div class="bar"><i class="grip"></i><button aria-label="Layer properties"><svg class="i32"><use href="#layprop"/></svg></button>
    <label class="layer"><svg class="i32"><use href="#bulb"/></svg><svg class="i32"><use href="#suno"/></svg><svg class="i32"><use href="#vpfreeze"/></svg><svg class="i32"><use href="#lock"/></svg><i class="swatch"></i><select aria-label="Layer"><option>Chao 3d</option></select><svg class="chev" viewBox="0 0 14 8"><path d="M1 1l6 6 6-6" fill="none" stroke="#444" stroke-width="2"/></svg></label>
    <button aria-label="Make current"><svg class="i32"><use href="#laycur"/></svg></button><button aria-label="Layer previous"><svg class="i32"><use href="#layprev"/></svg></button><button aria-label="Layer states"><svg class="i32"><use href="#laystate"/></svg></button></div>
  <div class="bar apart"><i class="grip"></i><button aria-label="Orbit"><svg class="i32"><use href="#orbit"/></svg></button><button aria-label="Free orbit"><svg class="i32"><use href="#orbit"/></svg></button><button aria-label="Continuous orbit"><svg class="i32"><use href="#orbit3"/></svg></button></div>
  <div class="bar"><i class="grip"></i><button aria-label="Distance"><svg class="i32"><use href="#dist"/></svg></button><button aria-label="Mass properties"><svg class="i32"><use href="#region"/></svg></button><i class="sep"></i><button aria-label="List"><svg class="i32"><use href="#list"/></svg></button><button aria-label="Locate point"><svg class="i32"><use href="#idpt"/></svg></button></div>
  <div class="bar"><i class="grip"></i><button aria-label="Paste"><svg class="i32"><use href="#paste"/></svg></button><i class="sep"></i><button aria-label="Attach"><svg class="i32"><use href="#att1"/></svg></button><button aria-label="Clip"><svg class="i32"><use href="#att2"/></svg></button><button aria-label="Bind"><svg class="i32"><use href="#att3"/></svg></button><button aria-label="Reference"><svg class="i32"><use href="#att4"/></svg></button><i class="sep"></i><button aria-label="Image"><svg class="i32"><use href="#pic"/></svg></button><button aria-label="Image clip"><svg class="i32"><use href="#picclip"/></svg></button><button aria-label="Image adjust"><svg class="i32"><use href="#picedit"/></svg></button><button aria-label="Image quality"><svg class="i32"><use href="#picq"/></svg></button><button aria-label="Image transparency"><svg class="i32"><use href="#pictr"/></svg></button><button aria-label="Image frame"><svg class="i32"><use href="#picfr"/></svg></button></div>
  <div class="bar"><i class="grip"></i><button aria-label="Bring to front"><svg class="i32"><use href="#ord1"/></svg></button><button aria-label="Send to back"><svg class="i32"><use href="#ord2"/></svg></button><button aria-label="Bring above"><svg class="i32"><use href="#ord3"/></svg></button><button aria-label="Send under"><svg class="i32"><use href="#ord4"/></svg></button><i class="sep"></i><button aria-label="Annotations to front"><svg class="i32"><use href="#abc"/></svg></button><button aria-label="Hatches to back"><svg class="i32"><use href="#hatchb"/></svg></button></div>
</div>

<main class="work">
  <aside class="dock"><button><i class="hgrip"></i><span>Layer Properties Manager</span></button><button><i class="hgrip"></i><span>Visual Styles Manager</span></button></aside>
  <div class="canvas">
    <svg class="scene" viewBox="59 523 2761 926" preserveAspectRatio="xMidYMid slice">
      <defs>
        <pattern id="ga" width="2800" height="45.6" patternUnits="userSpaceOnUse" patternTransform="translate(0 1303.2) skewY(6.56)"><path d="M0 10h2800M0 19.1h2800M0 28.2h2800M0 37.3h2800" stroke="#272e3a"/><path d="M0 1h2800" stroke="#313949" stroke-width="1.5"/></pattern>
        <pattern id="gb" width="2800" height="81" patternUnits="userSpaceOnUse" patternTransform="translate(0 802.3) skewY(-19.9)"><path d="M0 17.2h2800M0 33.4h2800M0 49.6h2800M0 65.8h2800" stroke="#262d39"/><path d="M0 1h2800" stroke="#303847" stroke-width="1.5"/></pattern>
        <pattern id="roof" width="90" height="7" patternUnits="userSpaceOnUse" patternTransform="skewY(6.5)"><path fill="#363834" d="M0 0h90v7H0z"/><path d="M0 1h50M30 4h60" stroke="#31332f"/></pattern>
        <filter id="stone" x="0" y="0" width="100%" height="100%" color-interpolation-filters="sRGB"><feTurbulence type="fractalNoise" baseFrequency=".09 .2" numOctaves="3" seed="7"/><feColorMatrix values=".5 0 0 0 .13  .5 0 0 0 .13  .5 0 0 0 .155  0 0 0 0 1"/><feComposite in2="SourceGraphic" operator="in"/></filter>
        <linearGradient id="bz"><stop offset="0" stop-color="#3560a8"/><stop offset=".5" stop-color="#4a79c4"/><stop offset=".75" stop-color="#a8c8f4"/><stop offset="1" stop-color="#3f6cb4"/></linearGradient>
        <linearGradient id="bx" x1="0" y1="0" x2="0" y2="1"><stop offset="0" stop-color="#b04848"/><stop offset=".45" stop-color="#ffaaaa"/><stop offset="1" stop-color="#8a3434"/></linearGradient>
        <linearGradient id="cf" x1="0" y1="0" x2="0" y2="1"><stop offset="0" stop-color="#9fa0a0"/><stop offset="1" stop-color="#c4c4c2"/></linearGradient>
        <filter id="rough" x="-10%" y="-20%" width="120%" height="140%"><feTurbulence type="fractalNoise" baseFrequency=".16" numOctaves="2" seed="4"/><feDisplacementMap in="SourceGraphic" scale="7"/></filter>
        <g id="treeA" fill="none" stroke="#0f0" stroke-width="1.6" filter="url(#rough)"><ellipse rx="62" ry="12" stroke-width="2"/><ellipse rx="56" ry="10" stroke-dasharray="14 5"/><ellipse cx="4" rx="42" ry="7.5" stroke-dasharray="9 4"/><ellipse cx="4" rx="32" ry="6"/><ellipse cx="-4" rx="26" ry="4" stroke-dasharray="7 3"/><ellipse rx="17" ry="3"/><path d="M-50 4l20-8 15 10 20-12 20 11 24-7"/></g>
        <g id="treeB" fill="none" stroke="#0f0" stroke-width="2" filter="url(#rough)"><ellipse rx="50" ry="10" stroke-dasharray="22 4"/><ellipse cx="4" rx="42" ry="8"/><ellipse cx="2" rx="34" ry="6"/><ellipse rx="26" ry="4"/><ellipse rx="16" ry="2"/><path d="M-46 2l20-8 12 11 20-13 18 12 20-9M-40-3l30 9 30-12 22 9"/></g>
      </defs>
      <rect x="59" y="520" width="2770" height="935" fill="#222831"/>
      <rect x="0" y="400" width="2900" height="1100" fill="url(#gb)"/>
      <rect x="0" y="400" width="2900" height="1100" fill="url(#ga)"/>
      <path d="M59 782L770 524" stroke="#25682b" stroke-width="1.5"/><path d="M59 1310L1270 1449" stroke="#7a2326" stroke-width="1.5"/>
      <use href="#treeA" x="1317" y="1045"/><use href="#treeB" x="1402" y="1042"/><use href="#treeB" x="1333" y="1078"/><use href="#treeB" x="2413" y="939"/><use href="#treeA" x="2365" y="1067"/><use href="#treeB" x="2500" y="1053"/>
      <path filter="url(#stone)" d="M1426 1093l58 6v16l-58-9z"/>
      <path fill="#313238" d="M1963 1133L2406 971v16L1985 1147z"/>
      <path fill="none" stroke="#6a6a6f" stroke-width="11" stroke-dasharray="8 2 5 1 9 2" d="M1975 1140L2406 979"/>
      <path fill="#2c2d33" d="M1473 1108q2 11 45 17l378 44v16l-378-45q-45-7-45-20z"/>
      <path fill="none" stroke="#707075" stroke-width="12" stroke-dasharray="12 3 17 2 9 3" d="M1478 1121q8 8 40 12l377 44"/>
      <path fill="#2c2d33" d="M1896 1169l89-33v16l-89 32z"/>
      <path fill="none" stroke="#606066" stroke-width="12" stroke-dasharray="10 2 7 2" d="M1898 1176l87-32"/>
      <path filter="url(#stone)" d="M1484 1098q-14 8-9 14 8 9 43 13l378 44 89-33-85-40-156-20z"/>
      <path fill="none" stroke="#7f9cf5" stroke-width="1.6" d="M1426 1093l58 6q-14 8-9 14 8 9 43 13l378 44 89-33-22-3L2406 971"/>
      <path fill="#8b8c91" d="M1426 860l318 30v239l-318-36z"/>
      <path fill="#74757a" d="M1744 895h44v219l-44 15z"/>
      <path fill="#8b8c91" d="M1788 890l175 15v228l-62-7-60-7-53-5z"/>
      <path fill="#747579" d="M1963 900l442-160v232l-442 161z"/>
      <path filter="url(#stone)" d="M1873 990l28 3v133l-60-7v-22l32-15z"/>
      <path fill="#747579" d="M1841 969l32 4v109l-25 9-7 5z"/><path fill="#8b8c91" d="M1841 1091h7v25l-7 3z"/>
      <path fill="none" stroke="#1c82f0" stroke-width="2" d="M1841 1119l38-13q8-1 22 3v18"/>
      <path d="M1524 1103l108 12" stroke="#00e5ff" stroke-width="2"/>
      <path fill="#a80cab" d="M1525 892l107 13v120l-107-12z"/><path fill="#70167a" d="M1533 899l6 1v103l87 11v5l-93-11z"/><path fill="#66706f" d="M1539 901l87 10v102l-87-10z"/>
      <path fill="#97009c" d="M2124 863l60-21v119l-60 23z"/><path fill="#66706f" d="M2129 868l40-14v98l-40 17z"/><path fill="#7a127e" d="M2169 854l3-1v100l-43 19v-4l40-16z"/>
      <path fill="url(#roof)" d="M1426 851L1911 673l494 57-484 178z"/>
      <path fill="#2b2c29" d="M1426 851l495 57v14l-495-55zM1921 908l484-178v15l-484 177z"/>
      <path d="M1426 855l495 57 484-178M1426 862l495 56 484-178" fill="none" stroke="#4a4c48" stroke-width="1.5" stroke-dasharray="9 3"/>
      <use href="#treeA" x="1397" y="1106"/>
      <g fill="none" stroke-width="2"><path stroke="#8080f5" d="M2549 531v156"/><path stroke="#e06a6a" stroke-width="1.5" d="M2503 631l141 14"/><path stroke="#6fe07a" stroke-width="1.5" d="M2524 645l78-28"/><path fill="#222831" stroke="#fff" d="M2544 629h11v12h-11z"/></g>
      <ellipse cx="2714" cy="668" rx="76" ry="21" fill="none" stroke="#50555f" stroke-width="12"/>
      <g class="nesw"><text transform="rotate(10 2643 658)" x="2643" y="658">W</text><text transform="rotate(-10 2662 694)" x="2662" y="694">S</text><text transform="rotate(10 2783 680)" x="2783" y="680">E</text></g>
      <path fill="#b4b4b3" d="M2671 601l32-9 52 5-28 8z"/><path fill="url(#cf)" d="M2671 601l56 4v66l-55-9z"/><path fill="#a7a8a8" d="M2727 605l28-8v59l-28 15z"/><path fill="#9aa5b0" opacity=".6" d="M2716 617l11 1 6-2v39l-6 3-11-1z"/>
      <path fill="none" stroke="#33373d" stroke-dasharray="6 2" d="M2671 601l56 4 28-8M2727 605v66"/>
      <text class="cube" x="2677" y="640" transform="rotate(2 2677 640)">FRONT</text><text class="cube side" x="2730" y="641" transform="rotate(-12 2730 641)">RIGHT</text>
      <path fill="#2f6a34" d="M111 1393l44-18q6 1 6 8l-40 19z"/>
      <path fill="url(#bz)" d="M103 1305l6-6 5 6v93h-11z"/><path fill="url(#bx)" d="M107 1392l88 10v10l-3 1-85-10z"/>
      <g class="axis"><text x="107" y="1297" fill="#1464f0">Z</text><text x="155" y="1373" fill="#1ca01c">Y</text><text x="190" y="1400" fill="#e02828">X</text></g>
    </svg>
    <p class="vplabel">[−][Custom View][Realistic]</p>
    <button class="wcs">WCS<svg viewBox="0 0 18 10"><path fill="#b9bcc6" stroke="#8b8e9a" d="M1 1h16L9 9z"/></svg></button>
    <div class="navbar"><svg viewBox="0 0 60 410" fill="none" stroke="#45494f" stroke-width="2"><circle cx="49" cy="10" r="6" stroke-width="3"/><path d="M46 7l6 6m0-6l-6 6"/><path d="M30 31h21v21a22 22 0 1 1-21-21z"/><circle cx="29" cy="53" r="12"/><path d="M20 62l-6 6M38 62l6 6"/><path fill="#45494f" d="M25 92h10l-5 5z"/><path d="M17 155q-4-8-11-14 3-6 11 2l-3-17q4-4 7 2l3 10V119q4-5 8 0v18l4-17q5-3 6 2l-2 17 5-12q5-1 4 4l-6 24q-6 7-14 6-8 0-12-8z"/><path stroke-width="3" d="M7 172l25 26M34 171L7 200M6 180v-9h10M27 171h9v8M6 191v9h9"/><circle cx="37" cy="201" r="10" stroke-width="3"/><path stroke-width="6" d="M44 209l7 6"/><path fill="#45494f" d="M25 232h10l-5 5z"/><path d="M25 288v-34h-4l8-8 8 8h-4v34zM6 270q10-7 30-6 16 2 14 9-4 6-22 6"/><path fill="#45494f" d="M12 279l8-7v13zM25 308h10l-5 5z"/><path stroke-width="3" d="M7 332h11v11H7zM23 332h11v11H23zM39 332h11v11H39zM6 350h33v25H6z"/><path fill="#45494f" d="M15 355v14l14-7z"/><circle cx="49" cy="398" r="6" stroke-width="3"/></svg></div>
    <form class="cmd">
      <i class="vgrip"></i>
      <button type="button" aria-label="Close command line"><svg class="i20" viewBox="0 0 20 20"><path stroke="#bbb" stroke-width="4" d="M2 2l16 16M18 2L2 18"/></svg></button>
      <button type="button" aria-label="Customize"><svg class="i32" viewBox="0 0 32 32"><path stroke="#bbb" stroke-width="5" stroke-linecap="round" d="M3 28L20 12"/><path fill="none" stroke="#bbb" stroke-width="5" d="M23 2q-7 4-3 10t11-2"/></svg></button>
      <div class="cmdline"><svg class="i32" viewBox="0 0 32 26"><path fill="none" stroke="#4b4e52" stroke-width="2" d="M1 1h30v24H1z"/><path fill="#4b4e52" d="M1 1h30v5H1z"/><path fill="none" stroke="#4b4e52" stroke-width="2" d="M4 9l6 5-6 5M12 20h8"/></svg><svg class="cdn" viewBox="0 0 16 8"><path fill="#4b4e52" d="M0 0h16L8 8z"/></svg><input type="text" placeholder="Type a command" aria-label="Command"><svg class="cdn" viewBox="0 0 16 8"><path fill="#4b4e52" d="M0 8h16L8 0z"/></svg></div>
    </form>
  </div>
  <aside class="dock right"><button><i class="hgrip"></i><span>External References</span></button><button><i class="hgrip"></i><span>Properties</span></button></aside>
</main>

<footer class="status">
  <button class="burger" aria-label="Layout list"><svg class="i32"><use href="#burger"/></svg></button>
  <a class="ltab on" href="#">Model</a><a class="ltab" href="#">Layout1</a><i class="slash"></i><a class="ltab" href="#">Layout2</a><i class="slash"></i>
  <button class="add" aria-label="New layout"><svg class="i28"><use href="#plus"/></svg></button><i class="slash"></i>
  <div class="sgroups">
    <div class="sg coords"><span>22.5920, 52.7506, 0.0000</span></div>
    <div class="sg"><button class="model">MODEL</button></div>
    <div class="sg"><button class="on" aria-label="Grid"><svg class="i32"><use href="#sgrid"/></svg></button><button aria-label="Snap"><svg class="i32"><use href="#sdots"/></svg></button><svg class="sdn"><use href="#dn"/></svg></div>
    <div class="sg"><button class="on" aria-label="Dynamic input"><svg class="i32"><use href="#sinfer"/></svg></button></div>
    <div class="sg join"><button aria-label="Ortho"><svg class="i32"><use href="#sortho"/></svg></button><button aria-label="Polar"><svg class="i32"><use href="#spolar"/></svg></button><svg class="sdn"><use href="#dn"/></svg><button aria-label="Isodraft"><svg class="i32"><use href="#siso"/></svg></button><svg class="sdn"><use href="#dn"/></svg></div>
    <div class="sg join"><button class="on" aria-label="Object tracking"><svg class="i32"><use href="#strack"/></svg></button><button class="on" aria-label="Object snap"><svg class="i32"><use href="#ssnap"/></svg></button><svg class="sdn"><use href="#dn"/></svg></div>
    <div class="sg join"><button aria-label="Lineweight"><svg class="i32"><use href="#slw"/></svg></button></div>
    <div class="sg join"><button class="on" aria-label="3D object snap"><svg class="i32"><use href="#sbox"/></svg></button><svg class="sdn"><use href="#dn"/></svg></div>
    <div class="sg"><button class="on" aria-label="Annotation visibility"><svg class="i32"><use href="#sann"/></svg></button><button aria-label="Auto scale"><svg class="i32"><use href="#sann2"/></svg></button><button aria-label="Annotation scale"><svg class="i32"><use href="#sann3"/></svg></button><span>1:1</span><svg class="sdn"><use href="#dn"/></svg></div>
    <div class="sg"><button aria-label="Workspace"><svg class="i32"><use href="#gear"/></svg></button><svg class="sdn"><use href="#dn"/></svg></div>
    <div class="sg join"><button aria-label="Annotation monitor"><svg class="i32"><use href="#sadd"/></svg></button></div>
    <div class="sg units"><button aria-label="Units"><svg class="i32"><use href="#sruler"/></svg></button><span>Decimal</span><svg class="sdn"><use href="#dn"/></svg></div>
    <div class="sg"><button aria-label="Quick properties"><svg class="i32"><use href="#sqp"/></svg></button></div>
    <div class="sg wide"><button aria-label="Trusted DWG"><svg class="i32"><use href="#sdwg"/></svg></button><button aria-label="Graphics"><svg class="i32"><use href="#sgfx"/></svg></button></div>
    <div class="sg"><button aria-label="Clean screen"><svg class="i32"><use href="#sclean"/></svg></button></div>
    <div class="sg"><button aria-label="Customization"><svg class="i32"><use href="#burger"/></svg></button></div>
  </div>
</footer>
</div>
</body>
</html>
```
FILE: styles.css
```css
:root {
  --dark: #222933;
  --panel: #3b4453;
  --field: #4e5a6e;
  --text: #f5f5f5;
  --muted: #b9bcc1;
}
* { box-sizing: border-box; }
body {
  margin: 0;
  height: 100vh;
  overflow: hidden;
  background: #d5dae2;
  font: 23px/32px "Open Sans", "Noto Sans", sans-serif;
  color: var(--text);
}
button, input, select { font: inherit; color: inherit; margin: 0; padding: 0; border: 0; background: none; }
button { display: flex; align-items: center; justify-content: center; flex: none; }
a { color: inherit; text-decoration: none; }
svg { display: block; flex: none; overflow: visible; }
.sprite { position: absolute; width: 0; height: 0; }
.i20 { width: 20px; height: 20px; }
.i28 { width: 28px; height: 28px; }
.i32 { width: 32px; height: 32px; }
.i64 { width: 64px; height: 64px; }
.caret { width: 10px; height: 6px; }
.caret.big { width: 16px; height: 9px; }

.app {
  display: flex;
  flex-direction: column;
  height: calc(100vh + 28px);
  margin-top: 1px;
  border: 3px solid #0a95da;
  border-radius: 16px;
  background: var(--dark);
  overflow: hidden;
}

/* title bar */
.titlebar { display: flex; align-items: center; height: 60px; padding-left: 28px; }
.logo svg { width: 49px; height: 44px; }
.titlebar > .caret.big { width: 14px; margin-left: 5px; }
.title { display: flex; gap: 36px; margin-left: 263px; white-space: nowrap; flex: 1; }
.play { width: 8px; height: 14px; margin-right: 10px; }
.search { width: 356px; height: 40px; background: #464f62; padding-left: 6px; font-size: 21px; font-style: italic; }
.search::placeholder { color: #a9adb5; opacity: 1; }
.tb { width: 50px; }
.account { width: 232px; justify-content: flex-start; padding-left: 8px; gap: 10px; margin-right: 10px; }
.account .caret { margin-left: auto; }
.vline { width: 2px; height: 36px; background: var(--panel); margin: 0 8px 0 20px; }
.assist { margin-left: 12px; }
.winctl { display: flex; margin-left: 120px; }
.winctl button { width: 92px; height: 40px; }

/* menus */
.menubar { display: flex; align-items: center; height: 43px; padding: 4px 0 0 25px; gap: 32px; color: var(--muted); border-bottom: 2px solid var(--panel); }
.docctl { display: flex; margin-left: auto; padding-right: 6px; }
.docctl button { width: 65px; }
.rtabs { display: flex; align-items: center; padding: 8px 0 0 13px; color: var(--muted); }
.rtabs a { height: 40px; line-height: 43px; padding: 0 20px; }
.rtabs .on { background: var(--panel); color: #fff; }
.rmin { margin: 0 8px 0 32px; }
.rmin svg { width: 30px; height: 16px; }

/* ribbon */
.ribbon {
  display: grid;
  grid-template-columns: 229fr 290fr 350fr 312fr 253fr 242fr 338fr 234fr 610fr;
  margin: 0 7px 0 8px;
  background: var(--panel);
}
.panel { display: flex; flex-direction: column; min-width: 0; padding-top: 12px; }
.panel + .panel { background: linear-gradient(var(--dark), var(--dark)) 0 2px / 2px 194px no-repeat; }
.body { height: 143px; white-space: nowrap; }
.rows { display: flex; flex-direction: column; gap: 5px; }
.cols { display: flex; }
.combo { display: flex; align-items: center; gap: 4px; height: 43px; padding: 0 4px; border: 2px solid #2b333f; background: var(--field); }
.combo select, .ws select, .layer select { appearance: none; flex: 1; min-width: 0; height: 100%; outline: 0; }
.rb { height: 43px; gap: 10px; justify-content: flex-start; padding-left: 7px; }
.pre { white-space: pre; }
.p1 { padding: 0 5px 0 9px; }
.p1 .combo { gap: 2px; }
.ptitle { display: flex; align-items: center; height: 43px; padding-top: 4px; }
.ptitle span { flex: 1; display: flex; justify-content: center; align-items: center; gap: 12px; white-space: nowrap; }
.launch { width: 10px; height: 10px; margin: 0 12px 0 6px; }
.ucs { display: grid; grid-template-columns: 40px 24px 66px 48px 48px 48px; grid-template-rows: 43px 43px 43px; row-gap: 5px; padding-left: 11px; align-items: center; justify-items: center; }
.ucs .combo { grid-column: 3 / 7; width: 198px; justify-self: start; margin-left: 11px; }
.lb { flex-direction: column; justify-content: flex-start; padding-top: 5px; text-align: center; }
.lb span { margin-top: 7px; }
.side { margin-top: 107px; }
.p3 { padding-left: 20px; }
.p3 .lb { width: 160px; }
.p3 .rows { margin-left: 17px; }
.p4 { padding: 0 5px 0 7px; }
.vs { display: grid; grid-template-columns: 46px 18px 58px 40px 22px 50px 20px; height: 43px; align-items: center; justify-items: center; }
.opac { display: flex; align-items: center; height: 43px; padding-left: 6px; }
.slider { position: relative; margin-left: 17px; width: 192px; height: 40px; border: 2px solid #343c49; }
.slider input { appearance: none; display: block; width: 100%; height: 100%; background: linear-gradient(90deg, var(--field) 60%, #3e4656 60%); }
.slider input::-webkit-slider-thumb { appearance: none; width: 0; height: 0; }
.slider label { position: absolute; left: 8px; top: 2px; color: #7c8493; }
.opnum { flex: 1; min-width: 0; height: 40px; background: #464f60; border: 2px solid #343c49; border-left: 0; text-align: center; color: #a9adb5; }
.p5 { padding-left: 20px; }
.p5 .lb { width: 80px; }
.p5 .side { margin-left: 2px; }
.p5 .side + .lb { width: 110px; margin-left: 18px; }
.p6 { padding-left: 18px; gap: 8px; }
.p6 .lb { width: 88px; }
.off { color: #7c8493; }
.lb > .caret { margin-top: 5px; }
.off .caret { opacity: .5; }
.p7 { padding-left: 6px; }
.p9 { padding-left: 19px; }
.p9 .lb:first-child { width: 170px; }
.p9 .rows { width: 200px; margin: 0 9px 0 16px; }
.p9 .lb { width: 100px; }
.prog { padding: 0 0 0 4px; background: #464f60; }
.prog div { flex: 1; height: 100%; display: flex; flex-direction: column; gap: 2px; }
.prog i { flex: 1; background: var(--field); }

/* quick access */
.qat { display: flex; align-items: center; height: 62px; padding-left: 16px; }
.qat button { width: 48px; height: 40px; }
.qat > .caret { margin: 0 7px; }
.redo svg { transform: scaleX(-1); }
.ws { display: flex; align-items: center; width: 356px; height: 40px; margin-left: 2px; padding: 0 2px 0 6px; gap: 4px; background: var(--panel); }
.qat .more { width: 32px; }
.more svg { width: 16px; height: 14px; }
.share { display: flex; align-items: center; gap: 10px; margin-left: 8px; color: #8acbff; }

/* drawing tabs */
.ftabs { display: flex; align-items: center; height: 48px; padding-left: 38px; white-space: nowrap; }
.slash { width: 2px; height: 34px; background: #48505f; transform: skewX(-22deg); flex: none; }
.ftabs .slash { margin: 0 24px; }
.ftabs .start { margin-right: 15px; }
.ftab { display: flex; align-items: center; height: 48px; padding: 0 31px 0 34px; gap: 18px; background: var(--panel); clip-path: polygon(20px 0, 100% 0, calc(100% - 20px) 100%, 0 100%); font-size: 22px; font-weight: 700; }
.ftab svg { width: 16px; height: 16px; }
.add { margin-left: 16px; }

/* toolbars */
.bars { display: flex; gap: 2px; padding: 8px 0 4px 3px; margin: 0 6px 0 5px; background: var(--panel); }
.bar { display: flex; align-items: center; height: 48px; border: 2px solid var(--dark); }
.apart { margin-left: 11px; }
.bar button { width: 46px; height: 40px; }
.bar button:last-child { width: 45px; }
.grip { width: 6px; height: 26px; margin: 0 4px; background: radial-gradient(#c8ccd2 1px, transparent 2px) 0 0 / 4px 5px; }
.sep { width: 2px; height: 40px; margin: 0 2px; background: #5d6675; }
.layer { display: flex; align-items: center; width: 600px; height: 38px; padding: 0 10px 0 8px; gap: 5px; background: #fff; color: #111; }
.swatch { width: 26px; height: 26px; margin: 0 5px 0 4px; background: #7f9fff; border: 2px solid #555; }
.chev { width: 14px; height: 8px; }

/* work area */
.work { display: flex; flex: 1; min-height: 0; }
.dock { display: flex; flex-direction: column; gap: 11px; width: 56px; padding: 8px 5px 9px 7px; }
.dock.right { width: 57px; padding: 8px 7px 9px 6px; }
.dock button { position: relative; flex: 1 1 0; background: var(--panel); }
.dock span { writing-mode: vertical-rl; transform: rotate(180deg); white-space: nowrap; }
.hgrip { position: absolute; top: 6px; left: 12px; width: 20px; height: 8px; background: radial-gradient(#e8e8e8 1px, transparent 2px) 0 0 / 4px 4px; }
.canvas { position: relative; flex: 1; min-width: 0; overflow: hidden; }
.scene { width: 100%; height: 100%; }
.axis text { font: 300 33px "Open Sans", sans-serif; }
.cube { font: 700 13px "Open Sans", sans-serif; fill: #4e535b; }
.cube.side { font-size: 8px; }
.nesw text { font: 700 16px "Open Sans", sans-serif; fill: #b5b8bc; }
.vplabel { position: absolute; left: 4px; top: 5px; margin: 0; }
.wcs { position: absolute; right: 59px; top: 220px; width: 94px; height: 34px; justify-content: space-between; padding: 0 10px 0 8px; border: 2px solid #a9adb9; border-radius: 8px; background: #9094a2; color: #50545e; font: 21px "Liberation Sans", sans-serif; }
.wcs svg { width: 18px; height: 10px; }
.navbar { position: absolute; right: 2px; top: 294px; width: 60px; height: 410px; border-radius: 6px; background: #5a5e62; }
.cmd { position: absolute; left: 591px; right: 589px; bottom: 1px; height: 50px; display: flex; align-items: center; background: #292e3b; border-radius: 6px; }
.vgrip { width: 8px; height: 36px; margin-left: 8px; background: radial-gradient(#bbb 1px, transparent 2px) 0 0 / 4px 6px; }
.cmd button { width: 48px; }
.cmdline { flex: 1; display: flex; align-items: center; height: 50px; margin-left: 3px; padding: 0 8px; gap: 6px; background: #bcbebf; border-radius: 4px; }
.cmdline input { flex: 1; padding-left: 6px; font-style: italic; }
.cmdline input::placeholder { color: #5b5e61; opacity: 1; }
.cdn { width: 16px; height: 8px; }

/* status bar */
.status { display: flex; align-items: flex-start; flex: none; height: 62px; margin: 0 5px; padding: 4px 4px 0 33px; border-top: 8px solid var(--panel); white-space: nowrap; }
.status .burger { height: 50px; }
.ltab { height: 50px; line-height: 48px; padding-left: 23px; }
.ltab.on { margin: -4px 0 0 24px; height: 54px; line-height: 56px; padding: 0 30px 0 27px; background: var(--panel); clip-path: polygon(16px 0, 100% 0, calc(100% - 16px) 100%, 0 100%); font-size: 22px; font-weight: 700; }
.ltab.on + .ltab { padding-left: 16px; }
.status .slash { height: 40px; margin: 4px 0 0 24px; }
.status .add { height: 50px; margin-left: 26px; }
.sgroups { display: flex; gap: 6px; margin-left: auto; }
.sg { display: flex; align-items: center; height: 50px; background: var(--panel); }
.join { margin-left: -4px; }
.sg button { width: 48px; height: 50px; background-clip: padding-box; border: 2px solid transparent; }
.sg button.on { background-color: #628fc3; }
.sg .model { width: 95px; }
.sdn { width: 16px; height: 8px; margin: 0 8px; }
.coords { padding: 0 11px 0 26px; }
.units span { margin: 0 15px 0 10px; }
.wide button { width: 57px; }
```
